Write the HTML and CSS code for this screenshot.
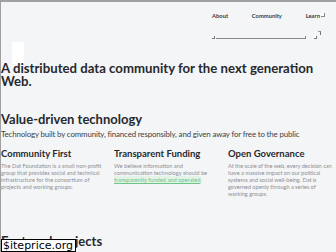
FILE: index.html
```html
<!DOCTYPE html>
<html>
<head>
<meta charset="utf-8">
<link rel="stylesheet" href="styles.css">
</head>
<body>
<div class="page">
  <header class="header">
    <div class="brand"><div class="logo-box"></div></div>
    <nav class="nav">
      <div class="nav-row">
        <span class="nav-item">About</span>
        <span class="nav-item">Community</span>
        <span class="nav-item learn">Learn<span class="sel"></span></span>
      </div>
      <div class="nav-bar">
        <span class="box"></span>
        <span class="track"></span>
        <span class="box box-right"></span>
        <span class="corner"></span>
      </div>
    </nav>
  </header>
  <main class="main">
    <h1 class="hero">A distributed data community for the next generation Web.</h1>
    <h2 class="section-title">Value-driven technology</h2>
    <p class="lead">Technology built by community, financed responsibly, and given away for free to the public</p>
    <div class="cols">
      <div class="col">
        <h3>Community First</h3>
        <p>The Dat Foundation is a small non-profit group that provides social and technical infrastructure for the consortium of projects and working groups.</p>
      </div>
      <div class="col">
        <h3>Transparent Funding</h3>
        <p>We believe information and communication technology should be <a class="link">transparently funded and operated</a>.</p>
      </div>
      <div class="col col-last">
        <h3>Open Governance</h3>
        <p>At the scale of the web, every decision can have a massive impact on our political systems and social well-being. Dat is governed openly through a series of working groups.</p>
      </div>
    </div>
    <h2 class="featured">Featured projects</h2>
  </main>
  <div class="watermark">$iteprice.org</div>
</div>
</body>
</html>
```
FILE: styles.css
```css
* { box-sizing: border-box; }
html, body { margin: 0; padding: 0; }
body {
  width: 336px;
  height: 252px;
  overflow: hidden;
  background: #f4f5f7;
  font-family: "Source Sans Pro", Lato, "Liberation Sans", sans-serif;
  color: #2a2d33;
}
.page {
  position: relative;
  height: 252px;
  border-top: 2px solid #a0a0a0;
  border-left: 1px solid #a0a0a0;
  overflow: hidden;
}
.header {
  display: flex;
  justify-content: space-between;
  height: 60px;
  padding-left: 11px;
}
.brand { padding-top: 40px; }
.logo-box { width: 12px; height: 22px; background: #ffffff; }
.nav { width: 112px; margin-right: 12px; padding-top: 10px; }
.nav-row {
  display: flex;
  justify-content: space-between;
  align-items: center;
  height: 7px;
  font-size: 5.8px;
  font-weight: 700;
  color: #3a3c41;
}
.learn { display: flex; align-items: center; gap: 1px; margin-right: -1px; }
.sel { width: 4px; height: 4px; border: 1px solid #8a8a8a; border-top: none; border-left: none; background: #fff; margin-top: -2px; }
.nav-bar {
  display: flex;
  align-items: flex-end;
  margin-top: 12px;
  height: 8px;
}
.box { width: 3px; height: 3px; border-right: 1px solid #777; border-bottom: 1px solid #777; background: #fff; }
.track { width: 90px; height: 3px; border-bottom: 1px solid #8a8a8a; border-right: 1px solid #8a8a8a; margin-left: 1px; }
.box-right { margin-left: 8px; }
.corner { width: 3px; height: 4px; border-right: 1px solid #777; border-top: 1px solid #999; align-self: flex-start; margin-left: 1px; }
.hero {
  margin: 0;
  font-size: 13.2px;
  line-height: 13px;
  font-weight: 700;
  color: #27292e;
}
.section-title {
  margin: 24px 0 0;
  font-size: 13px;
  line-height: 14px;
  font-weight: 700;
  color: #27292e;
}
.lead {
  margin: 2px 0 0;
  font-size: 7.9px;
  letter-spacing: -0.15px;
  line-height: 12px;
  color: #3c3f45;
}
.cols {
  display: grid;
  grid-template-columns: 113px 114px 1fr;
  margin-top: 8px;
}
.col h3 {
  margin: 0;
  font-size: 9.5px;
  line-height: 12px;
  font-weight: 700;
  color: #27292e;
}
.col p {
  margin: 2px 0 0;
  width: 108px;
  font-size: 5.7px;
  line-height: 7px;
  color: #8d9095;
}
.col-last p { width: 106px; letter-spacing: -0.05px; }
.link { color: #6fc488; text-decoration: underline; background: #e3f3e8; }
.featured {
  margin: 37px 0 0;
  font-size: 13px;
  line-height: 14px;
  font-weight: 700;
  color: #27292e;
}
.watermark {
  position: absolute;
  left: 0;
  bottom: 0;
  background: #ffffff;
  border: 1px solid #000;
  font-family: "DejaVu Sans", sans-serif;
  font-size: 11px;
  line-height: 11px;
  padding: 0 2px 0 1px;
  color: #000;
}
```
